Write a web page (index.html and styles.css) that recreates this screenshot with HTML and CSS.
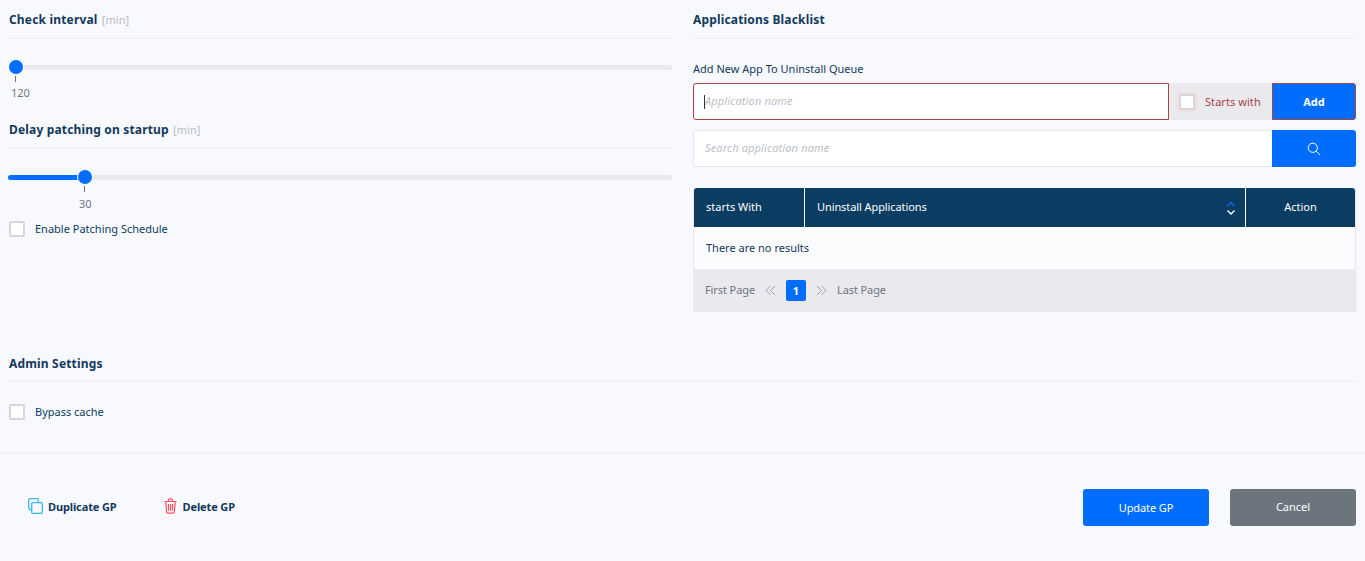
FILE: index.html
```html
<!DOCTYPE html>
<html lang="en">
<head>
<meta charset="utf-8">
<title>Group Policy</title>
<link rel="stylesheet" href="styles.css">
</head>
<body>
<main class="page">
  <div class="columns">
    <section class="col">
      <h2 class="heading">Check interval <span class="unit">[min]</span></h2>
      <div class="slider">
        <div class="track"><div class="fill fill-zero"></div><div class="thumb"></div></div>
        <div class="mark mark-zero"><i></i><span>120</span></div>
      </div>
      <h2 class="heading">Delay patching on startup <span class="unit">[min]</span></h2>
      <div class="slider">
        <div class="track"><div class="fill fill-30"></div><div class="thumb"></div></div>
        <div class="mark mark-30"><i></i><span>30</span></div>
      </div>
      <label class="check check-schedule"><span class="box"></span>Enable Patching Schedule</label>
    </section>
    <section class="col">
      <h2 class="heading heading-flush">Applications Blacklist</h2>
      <div class="field-label">Add New App To Uninstall Queue</div>
      <div class="input-row error">
        <div class="input"><span class="caret"></span><em>Application name</em></div>
        <div class="addon"><span class="box box-error"></span>Starts with</div>
        <button class="btn-add">Add</button>
      </div>
      <div class="input-row search">
        <div class="input"><em>Search application name</em></div>
        <button class="btn-search" aria-label="Search">
          <svg width="14" height="14" viewBox="0 0 14 14" fill="none" stroke="#fff" stroke-width="1"><circle cx="5.800" cy="5.800" r="4.600"/><path d="M9.200 9.200 13.200 13.200"/></svg>
        </button>
      </div>
      <div class="table">
        <div class="thead">
          <div class="th th-starts"><span>starts With</span></div>
          <div class="th th-apps"><span>Uninstall Applications</span>
            <svg class="sort" width="10" height="14" viewBox="0 0 10 14" fill="none" stroke-width="1.400"><path d="M1.500 5 5 1.500 8.500 5" stroke="#006dff"/><path d="M1.500 9.500 5 13 8.500 9.500" stroke="#fff"/></svg>
          </div>
          <div class="th th-action"><span>Action</span></div>
        </div>
        <div class="empty">There are no results</div>
        <div class="pager">
          <span>First Page</span>
          <svg class="chev chev-prev" width="11" height="11" viewBox="0 0 11 11" fill="none" stroke="#9aa3b0"><path d="M5.500 1 1 5.500 5.500 10M10 1 5.500 5.500 10 10"/></svg>
          <b class="current">1</b>
          <svg class="chev" width="11" height="11" viewBox="0 0 11 11" fill="none" stroke="#9aa3b0"><path d="M1 1 5.500 5.500 1 10M5.500 1 10 5.500 5.500 10"/></svg>
          <span>Last Page</span>
        </div>
      </div>
    </section>
  </div>
  <section class="admin">
    <h2 class="heading heading-admin">Admin Settings</h2>
    <label class="check check-bypass"><span class="box"></span>Bypass cache</label>
  </section>
  <footer class="footer">
    <div class="links">
      <a class="link">
        <svg width="15" height="16" viewBox="0 0 15 16" fill="none" stroke="#3bb8e8" stroke-width="1.300"><path d="M3.500 11.500H2A1.300 1.300 0 0 1 .7 10.200V2A1.300 1.300 0 0 1 2 .7H9A1.300 1.300 0 0 1 10.300 2V4.500"/><rect x="3.700" y="4.700" width="10.600" height="10.600" rx="1.200"/></svg>
        Duplicate GP
      </a>
      <a class="link link-delete">
        <svg width="13" height="16" viewBox="0 0 13 16" fill="none" stroke="#f9525c" stroke-width="1.200"><path d="M.5 3.500H12.500M4.500 3.300V1.800A1 1 0 0 1 5.500.8H7.500A1 1 0 0 1 8.500 1.800V3.300M1.800 3.500 2.600 14A1.300 1.300 0 0 0 3.900 15.200H9.100A1.300 1.300 0 0 0 10.400 14L11.200 3.500M4.500 6V12.800M6.500 6V12.800M8.500 6V12.800"/></svg>
        Delete GP
      </a>
    </div>
    <div class="actions">
      <button class="btn btn-primary">Update GP</button>
      <button class="btn btn-secondary">Cancel</button>
    </div>
  </footer>
</main>
</body>
</html>
```
FILE: styles.css
```css
* { box-sizing: border-box; }
html, body { margin: 0; padding: 0; }
body {
  background: #f8f9ff;
  font-family: "Noto Sans", "Open Sans", sans-serif;
  font-size: 11px;
  color: #0b3c61;
  height: 561px;
  overflow: hidden;
}
.page { display: flex; flex-direction: column; height: 561px; }
.columns { display: flex; gap: 21px; padding: 0 9px 0 8px; height: 352px; }
.col { flex: 0 0 auto; width: 664px; }
.col:last-child { width: 663px; }
.heading {
  margin: 0;
  height: 39px;
  padding: 11px 0 0 1px;
  line-height: 17px;
  font-size: 12px;
  font-weight: 700;
  letter-spacing: .17px;
  color: #12395b;
  border-bottom: 1px solid #eceef4;
}
.heading-flush { padding-left: 0; }
.unit { font-weight: 400; font-size: 11px; color: #b9bcc6; letter-spacing: .04px; margin-left: 1px; }
.slider { height: 71px; padding-top: 26px; position: relative; }
.track { height: 5px; background: #e9e9ee; border-radius: 3px; position: relative; }
.fill { height: 5px; background: #006dff; border-radius: 3px; }
.fill-zero { width: 0; }
.fill-30 { width: 76px; }
.thumb {
  position: absolute;
  top: -5px;
  left: 1px;
  width: 14px;
  height: 14px;
  border-radius: 50%;
  background: #006dff;
  box-shadow: 0 0 0 1px #f8f9ff;
}
.fill-30 + .thumb { left: 70px; }
.mark { position: absolute; top: 37px; color: #6c7482; line-height: 14px; }
.mark i { display: block; width: 1px; height: 6px; background: #6c7482; }
.mark span { display: block; margin-top: 4px; }
.mark-zero { left: 7px; }
.mark-zero span { margin-left: -4px; }
.mark-30 { left: 76px; }
.mark-30 span { margin-left: -5px; margin-top: 5px; }
.check { display: flex; align-items: center; gap: 10px; line-height: 16px; color: #0b3c61; }
.box {
  display: block;
  flex: 0 0 16px;
  width: 16px;
  height: 16px;
  background: #fff;
  border: 2px solid #d6d7df;
  border-radius: 2px;
}
.check-schedule { padding-left: 1px; margin-top: 1px; }
.field-label { margin-top: 21px; line-height: 18px; color: #12395b; }
.input-row { display: flex; height: 37px; }
.error { margin-top: 5px; }
.search { margin-top: 10px; }
.input {
  flex: 1 1 auto;
  display: flex;
  align-items: center;
  background: #fff;
  padding: 0 0 2px 11px;
  border: 1px solid #e6e8ee;
  border-right: 0;
  border-radius: 3px 0 0 3px;
  position: relative;
}
.input em { color: #bcbfc9; font-style: italic; letter-spacing: .14px; }
.error .input { border: 1px solid #a94442; }
.caret { position: absolute; left: 10px; top: 11px; width: 1px; height: 14px; background: #333; }
.addon {
  flex: 0 0 103px;
  display: flex;
  align-items: center;
  gap: 10px;
  padding-left: 10px;
  background: #e9e9ee;
  color: #a94442;
  letter-spacing: .06px;
}
.box-error { box-shadow: 0 0 0 2px #f3dede; }
.btn-add, .btn-search {
  flex: 0 0 84px;
  border: 0;
  background: #006dff;
  color: #fff;
  font: 700 11px "Noto Sans", sans-serif;
  border-radius: 0 3px 3px 0;
  display: flex;
  align-items: center;
  justify-content: center;
  padding: 0;
}
.btn-add { border: 1px solid #a94442; }
.table { margin-top: 21px; border-left: 1px solid #e6e8ee; border-right: 1px solid #e6e8ee; }
.thead { display: flex; height: 39px; background: #0b3c61; color: #fff; border-radius: 3px 3px 0 0; }
.th { display: flex; align-items: center; padding: 0 0 2px 12px; }
.th-starts { width: 111px; border-right: 1px solid #fff; }
.th-apps { width: 441px; justify-content: space-between; padding-right: 9px; padding-bottom: 0; border-right: 1px solid #fff; }
.th-apps span { margin-bottom: 2px; letter-spacing: -.09px; }
.th-action { flex: 1 1 auto; justify-content: center; padding-left: 0; }
.empty { height: 42px; background: #fcfcff; padding: 0 0 2px 12px; display: flex; align-items: center; color: #12395b; }
.pager {
  height: 43px;
  margin-left: -1px;
  background: #e9e9ee;
  display: flex;
  align-items: center;
  padding-left: 12px;
  color: #6c7482;
}
.pager span { margin-bottom: 2px; letter-spacing: -.1px; }
.chev { margin: 0 10px; }
.chev-prev { margin: 0 11px 0 10px; }
.current {
  width: 20px;
  height: 21px;
  margin-left: -1px;
  background: #006dff;
  color: #fff;
  display: flex;
  align-items: center;
  justify-content: center;
  border-radius: 2px;
}
.admin { flex: 0 0 auto; height: 102px; padding: 0 8px; border-bottom: 1px solid #eceef4; }
.heading-admin { height: 30px; padding-top: 3px; }
.check-bypass { padding-left: 1px; margin-top: 22px; }
.footer { display: flex; justify-content: space-between; padding: 35px 9px 0 28px; }
.links { display: flex; gap: 47px; padding-top: 9px; height: 26px; }
.link { display: flex; align-items: center; gap: 5px; font-weight: 700; color: #12395b; height: 16px; letter-spacing: -.12px; }
.link-delete { gap: 6px; }
.link svg { flex: 0 0 auto; }
.actions { display: flex; gap: 21px; }
.btn { width: 126px; height: 37px; border: 0; border-radius: 3px; color: #fff; font: 400 11px "Noto Sans", sans-serif; padding: 0; }
.btn-primary { background: #006dff; letter-spacing: -.1px; }
.btn-secondary { background: #6c757d; padding-bottom: 2px; }
```
